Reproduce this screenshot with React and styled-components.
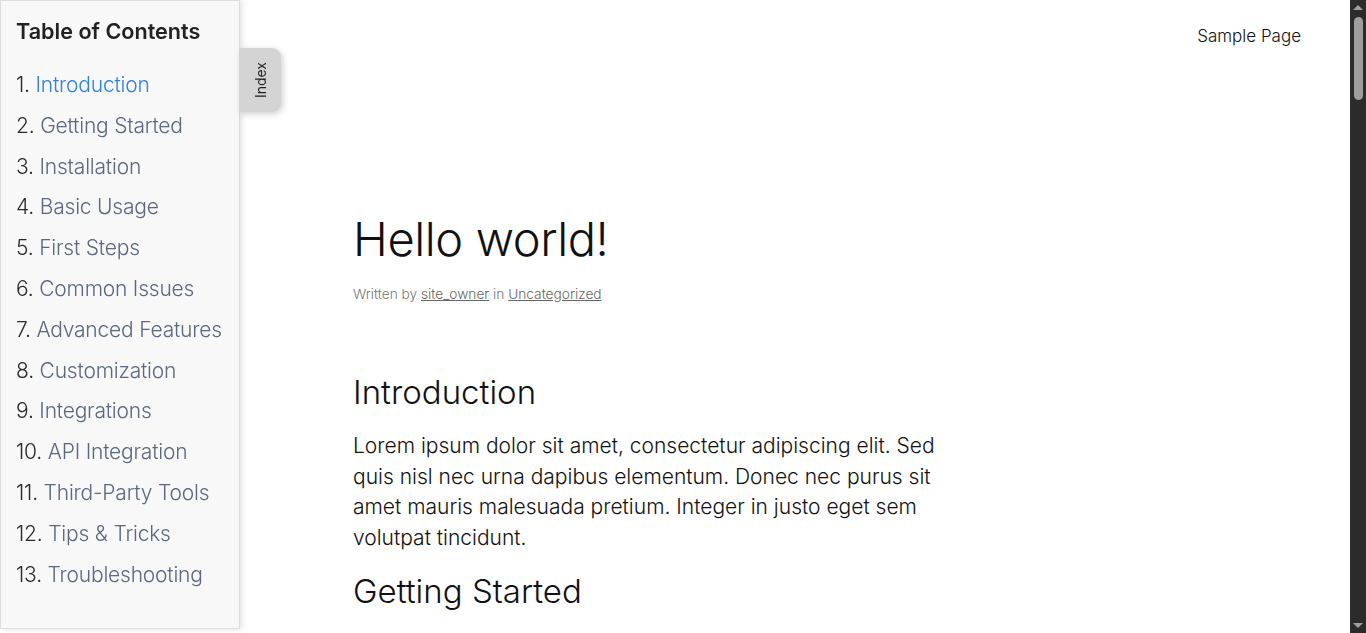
import React from "react";
import styled, { createGlobalStyle } from "styled-components";

const sections = [
  "Introduction",
  "Getting Started",
  "Installation",
  "Basic Usage",
  "First Steps",
  "Common Issues",
  "Advanced Features",
  "Customization",
  "Integrations",
  "API Integration",
  "Third-Party Tools",
  "Tips & Tricks",
  "Troubleshooting",
];

const LOREM = [
  "Lorem ipsum dolor sit amet, consectetur adipiscing elit. Sed quis nisl nec urna dapibus elementum. Donec nec purus sit amet mauris malesuada pretium. Integer in justo eget sem volutpat tincidunt.",
  "Vestibulum ante ipsum primis in faucibus orci luctus et ultrices posuere cubilia curae. Nulla facilisi. Mauris vitae ligula at erat pulvinar faucibus sed non mi.",
  "Curabitur non nulla sit amet nisl tempus convallis quis ac lectus. Praesent sapien massa, convallis a pellentesque nec, egestas non nisi. Proin eget tortor risus.",
];

const GlobalStyle = createGlobalStyle`
  html, body {
    height: 100%;
  }
  body {
    margin: 0;
    overflow: hidden;
    background: #ffffff;
    color: #111111;
    font-family: Inter, "Noto Sans", sans-serif;
  }
`;

const Shell = styled.div`
  display: grid;
  grid-template-columns: 1fr 16px;
  height: 100vh;
`;

const Viewport = styled.div`
  overflow-y: auto;
  scrollbar-width: none;
  &::-webkit-scrollbar {
    display: none;
  }
`;

/* dark classic scrollbar, as the browser drew it in the reference */
const ScrollTrack = styled.div`
  display: flex;
  flex-direction: column;
  align-items: center;
  background: #2b2b2b;
`;

const ScrollArrow = styled.svg`
  flex: none;
  width: 16px;
  height: 15px;
  fill: #a0a0a0;
`;

const ScrollArea = styled.div`
  flex: 1;
  width: 100%;
  display: flex;
  justify-content: center;
  padding-top: 2px;
`;

const ScrollThumb = styled.div`
  width: 9px;
  height: 83px;
  border-radius: 5px;
  background: #9e9e9e;
`;

const Sidebar = styled.aside`
  position: fixed;
  top: 0;
  left: 0;
  z-index: 10;
  width: 240px;
  box-sizing: border-box;
  padding: 16px 15px 33px;
  background: #f8f8f8;
  border: 1px solid #dddddd;
  box-shadow: 2px 0 6px rgba(0, 0, 0, 0.12);
`;

const TocTitle = styled.h2`
  margin: 0 0 20px;
  font-size: 21.6px;
  line-height: 28px;
  font-weight: 600;
  color: #222222;
`;

const TocList = styled.ol`
  list-style: none;
  margin: 0;
  padding: 0;
`;

const TocItem = styled.li`
  font-size: 21px;
  line-height: 40.8px;
  font-weight: 300;
  white-space: nowrap;
  color: #2a2a2a;
  letter-spacing: -0.2px;
`;

const TocLink = styled.a`
  color: ${(p) => (p.$active ? "#2f80ed" : "#5b6880")};
  text-decoration: none;
`;

const IndexTab = styled.button`
  position: absolute;
  top: 47px;
  left: 100%;
  width: 42px;
  height: 64px;
  padding: 0;
  border: none;
  border-radius: 0 9px 9px 0;
  background: #d4d4d4;
  box-shadow: 2px 2px 6px rgba(0, 0, 0, 0.18);
  color: #222222;
  font-family: Inter, "Noto Sans", sans-serif;
  font-size: 14px;
  cursor: pointer;
  display: flex;
  align-items: center;
  justify-content: center;

  span {
    writing-mode: vertical-rl;
    transform: rotate(180deg);
  }
`;

const Header = styled.header`
  display: flex;
  justify-content: flex-end;
  padding: 24px 49px 0 0;
  height: 48px;
`;

const NavLink = styled.a`
  font-size: 17px;
  line-height: 24px;
  font-weight: 300;
  color: #111111;
  text-decoration: none;
`;

const Article = styled.main`
  max-width: 644px;
  margin: 0 auto;
  padding: 137px 0 120px;
`;

const PostTitle = styled.h1`
  margin: 0 0 15px;
  font-size: 47px;
  line-height: 60px;
  font-weight: 300;
  letter-spacing: -0.4px;
  color: #111111;
`;

const Meta = styled.p`
  margin: 0 0 68px;
  font-size: 13.7px;
  line-height: 20px;
  font-weight: 300;
  color: #777777;

  a {
    color: #666666;
    text-decoration: underline;
  }
`;

const Section = styled.section`
  width: 596px;
`;

const SectionTitle = styled.h2`
  margin: 17px 0 18px;
  font-size: 33px;
  line-height: 41px;
  font-weight: 300;
  color: #111111;
`;

const Paragraph = styled.p`
  margin: 0;
  font-size: 21px;
  line-height: 30.7px;
  font-weight: 300;
  color: #111111;
`;

export default function App() {
  return (
    <>
      <GlobalStyle />
      <Sidebar>
        <TocTitle>Table of Contents</TocTitle>
        <TocList>
          {sections.map((s, i) => (
            <TocItem key={s}>
              {i + 1}. <TocLink href={`#s${i}`} $active={i === 0}>{s}</TocLink>
            </TocItem>
          ))}
        </TocList>
        <IndexTab>
          <span>Index</span>
        </IndexTab>
      </Sidebar>

      <Shell>
        <Viewport>
          <Header>
            <NavLink href="#">Sample Page</NavLink>
          </Header>

          <Article>
            <PostTitle>Hello world!</PostTitle>
            <Meta>
              Written by <a href="#">site_owner</a> in <a href="#">Uncategorized</a>
            </Meta>
            {sections.map((s, i) => (
              <Section key={s} id={`s${i}`}>
                <SectionTitle>{s}</SectionTitle>
                <Paragraph>{LOREM[i % LOREM.length]}</Paragraph>
              </Section>
            ))}
          </Article>
        </Viewport>

        <ScrollTrack>
          <ScrollArrow viewBox="0 0 16 15">
            <polygon points="3,10 8,5 13,10" />
          </ScrollArrow>
          <ScrollArea>
            <ScrollThumb />
          </ScrollArea>
          <ScrollArrow viewBox="0 0 16 15">
            <polygon points="3,5 8,10 13,5" />
          </ScrollArrow>
        </ScrollTrack>
      </Shell>
    </>
  );
}
